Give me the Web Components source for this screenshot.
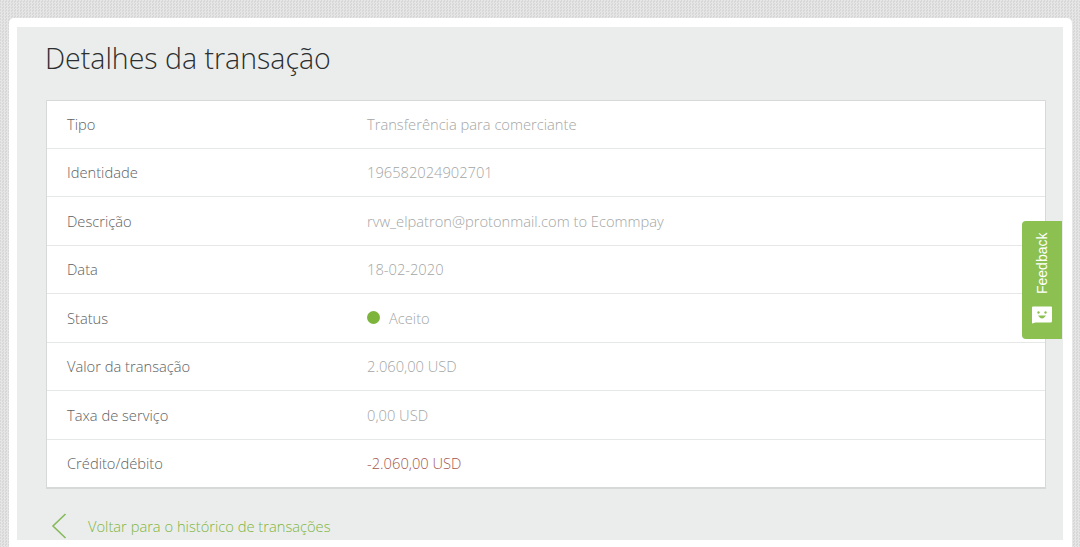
<!DOCTYPE html>
<html lang="pt">
<head>
<meta charset="utf-8">
<title>Detalhes da transação</title>
<style>
html,body{margin:0;height:100%;overflow:hidden}
body{font-family:"Open Sans","Liberation Sans",sans-serif;background-color:#dedede;background-image:repeating-conic-gradient(#e6e6e6 0 25%,#d7d7d7 0 50%);background-size:3px 3px}
</style>
</head>
<body>
<tx-page>
  <tx-title>Detalhes da transação</tx-title>
  <tx-table>
    <tx-row label="Tipo">Transferência para comerciante</tx-row>
    <tx-row label="Identidade">196582024902701</tx-row>
    <tx-row label="Descrição">rvw_elpatron@protonmail.com to Ecommpay</tx-row>
    <tx-row label="Data">18-02-2020</tx-row>
    <tx-row label="Status"><tx-status>Aceito</tx-status></tx-row>
    <tx-row label="Valor da transação">2.060,00 USD</tx-row>
    <tx-row label="Taxa de serviço">0,00 USD</tx-row>
    <tx-row label="Crédito/débito" tone="debit">-2.060,00 USD</tx-row>
  </tx-table>
  <tx-back>Voltar para o histórico de transações</tx-back>
</tx-page>
<tx-feedback></tx-feedback>
<script>
function def(name,html){
  customElements.define(name,class extends HTMLElement{
    constructor(){super();this.attachShadow({mode:'open'}).innerHTML=html;}
    connectedCallback(){
      const l=this.shadowRoot.querySelector('[data-label]');
      if(l)l.textContent=this.getAttribute('label')||'';
    }
  });
}
def('tx-page',`<style>
:host{display:block;box-sizing:border-box;height:529px;margin:18px 8px 0 9px;padding:9px 9px 7px 8px;background:#fff;border-radius:5px 5px 0 0}
.in{height:100%;box-sizing:border-box;background:#ebeded;padding:0 17px 0 29px;overflow:hidden}
</style><div class="in"><slot></slot></div>`);
def('tx-title',`<style>
:host{display:block;height:73px;margin-left:-1px;font-weight:300;font-size:28.5px;line-height:62px;color:#2b2f30;white-space:nowrap}
</style><slot></slot>`);
def('tx-table',`<style>
:host{display:block;background:#fff;border:1px solid #d7d9d9;border-width:1px 1px 2px 1px;box-sizing:border-box;height:389px}
</style><slot></slot>`);
def('tx-row',`<style>
:host{display:grid;grid-template-columns:300px 1fr;box-sizing:border-box;height:48.5px;align-items:center;padding:0 20px;border-bottom:1px solid #e6e8e8;font-weight:300;font-size:14.7px;white-space:nowrap;color:#a3a6a6}
:host(:first-child){height:47.5px;padding-bottom:1px}
:host(:last-child){border-bottom:0;padding-bottom:2px}
:host([tone=debit]) .v{color:#a4564f}
.k{color:#5d6163}
</style><span class="k" data-label></span><span class="v"><slot></slot></span>`);
def('tx-status',`<style>
:host{display:inline-flex;align-items:center;gap:9px}
i{width:13px;height:13px;border-radius:50%;background:#7db53c}
</style><i></i><span><slot></slot></span>`);
def('tx-back',`<style>
:host{display:flex;align-items:center;gap:21px;margin:20px 0 0 5px;height:34px;font-weight:300;font-size:14.7px;color:#7db53c;white-space:nowrap}
svg{display:block;flex:none}
</style><svg width="16" height="26" viewBox="0 0 16 26" fill="none" stroke="#86b95a" stroke-width="1.6"><path d="M14.500 1 2 13l12.500 12"/></svg><span><slot></slot></span>`);
def('tx-feedback',`<style>
:host{position:absolute;left:1022px;top:221px;width:40px;height:118px;background:#8cc152;border-radius:4px 0 0 4px;color:#fff;display:flex;flex-direction:column;align-items:center;font:14px "Liberation Sans",Arial,sans-serif}
span{writing-mode:vertical-rl;transform:rotate(180deg);margin-top:12px;height:61px;line-height:16px;text-align:left}
svg{display:block;margin-top:12px}
</style><span>Feedback</span><svg width="22" height="18" viewBox="0 0 22 18"><path d="M1 1.500Q1 .5 2 .5H20Q21 .5 21 1.500V15Q21 16.500 19.500 16.500H4.500L1 17.500Z" fill="#fff"/><circle cx="7.500" cy="6.500" r="1.200" fill="#8cc152"/><circle cx="14.500" cy="6.500" r="1.200" fill="#8cc152"/><path d="M7 9.500Q11 15.500 15 9.500Z" fill="#8cc152"/></svg>`);
</script>
</body>
</html>
